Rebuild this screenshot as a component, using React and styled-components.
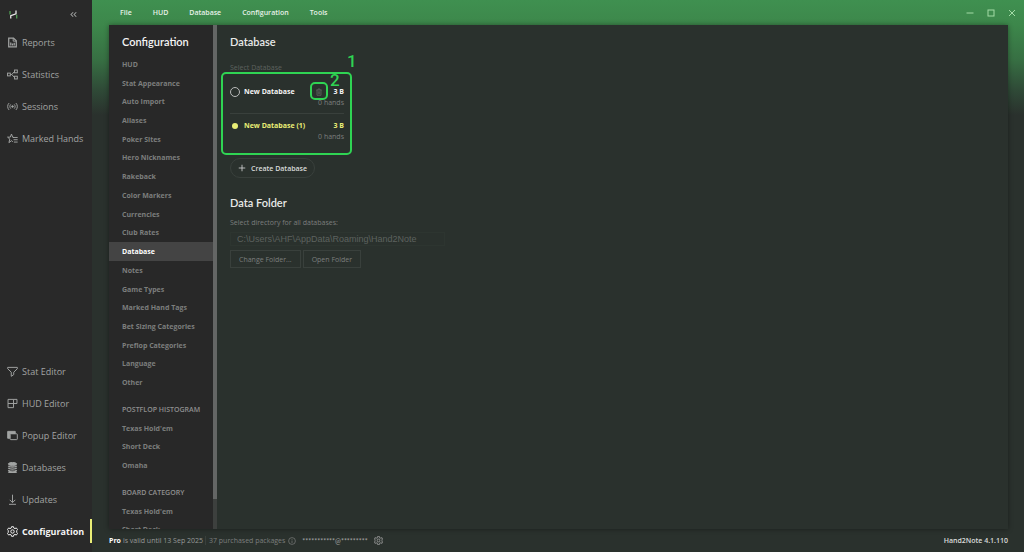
import React, { useState } from 'react';
import styled, { createGlobalStyle, ThemeProvider } from 'styled-components';

const theme = {
  colors: {
    sidebar: '#292929',
    surface: '#2a312d',
    nav: '#282828',
    navActive: '#444444',
    white: '#f4f4f4',
    text: '#a2a4a3',
    muted: '#7c7e7d',
    dim: '#5d625f',
    line: '#39403c',
    yellow: '#e9ee76',
    mark: '#2fd453',
  },
  fonts: {
    display: "Lato, 'Open Sans', sans-serif",
    mono: "'Liberation Sans', Arial, sans-serif",
  },
  fontSize: {
    xs: '7px',
    sm: '9px',
    lg: '11px',
  },
};

const GlobalStyle = createGlobalStyle`
  * {
    box-sizing: border-box;
  }

  body {
    margin: 0;
    background: #2a312d;
    font-family: 'Open Sans', 'Noto Sans', sans-serif;
    font-size: 7px;
  }

  button,
  input {
    font-family: inherit;
    margin: 0;
  }

  ul {
    list-style: none;
    margin: 0;
    padding: 0;
  }
`;

const Window = styled.div`
  display: flex;
  height: 100vh;
  overflow: hidden;
`;

const Sidebar = styled.nav`
  display: flex;
  flex-direction: column;
  width: 92px;
  flex-shrink: 0;
  padding-bottom: 5px;
  background: ${props => props.theme.colors.sidebar};
`;

const SidebarHeader = styled.div`
  display: flex;
  align-items: center;
  justify-content: space-between;
  height: 26px;
  padding: 2px 14px 0 8px;
`;

const IconButton = styled.button`
  display: flex;
  align-items: center;
  justify-content: center;
  padding: 0;
  border: none;
  background: none;
  color: ${props => props.theme.colors.text};
  cursor: pointer;
`;

const SidebarLink = styled.a`
  position: relative;
  display: flex;
  align-items: center;
  gap: 4px;
  height: 32px;
  padding-left: 7px;
  color: ${props => (props.$active ? props.theme.colors.white : props.theme.colors.text)};
  font-size: ${props => props.theme.fontSize.sm};
  font-weight: ${props => (props.$active ? 700 : 400)};
  text-decoration: none;
  white-space: nowrap;

  &::after {
    content: '';
    display: ${props => (props.$active ? 'block' : 'none')};
    position: absolute;
    right: 0;
    top: 4px;
    bottom: 4px;
    width: 2px;
    background: ${props => props.theme.colors.yellow};
  }
`;

const Spacer = styled.div`
  flex: 1;
`;

const Main = styled.div`
  display: flex;
  flex-direction: column;
  flex: 1;
  min-width: 0;
  background: linear-gradient(
    180deg,
    #3f9050 0,
    #3d874b 25px,
    #376f43 60px,
    #2f4a37 90px,
    ${props => props.theme.colors.surface} 115px
  );
`;

const TitleBar = styled.header`
  display: flex;
  align-items: center;
  justify-content: space-between;
  height: 25px;
  padding: 0 8px 0 28px;
`;

const Menu = styled.div`
  display: flex;
  gap: 21px;
`;

const MenuButton = styled.button`
  padding: 0;
  border: none;
  background: none;
  color: #e6f1e8;
  font-size: ${props => props.theme.fontSize.xs};
  font-weight: 600;
  cursor: pointer;
`;

const WindowControls = styled.div`
  display: flex;
  gap: 13px;

  button {
    width: 8px;
    color: #a3dba6;
  }
`;

const Panel = styled.div`
  display: flex;
  flex: 1;
  min-height: 0;
  margin: 0 16px 0 17px;
  background: ${props => props.theme.colors.surface};
  box-shadow: 0 0 5px rgba(0, 0, 0, 0.4);
`;

const ConfigNav = styled.nav`
  flex: 0 0 104px;
  overflow: hidden;
  background: ${props => props.theme.colors.nav};
`;

const NavTitle = styled.h2`
  margin: 0;
  padding: 9px 13px 0;
  height: 30px;
  color: ${props => props.theme.colors.white};
  font-family: ${props => props.theme.fonts.display};
  font-size: ${props => props.theme.fontSize.lg};
  font-weight: 600;
  line-height: 16px;
`;

// rows share the height of their group evenly
const NavList = styled.ul`
  display: grid;
  grid-auto-rows: 1fr;
  height: ${props => props.$height}px;
  margin-bottom: 9px;
`;

const NavLink = styled.a`
  display: flex;
  align-items: center;
  height: 100%;
  padding-left: 13px;
  background: ${props => (props.$active ? props.theme.colors.navActive : 'none')};
  color: ${props => (props.$active ? '#ffffff' : props.theme.colors.muted)};
  font-size: ${props => props.theme.fontSize.xs};
  font-weight: 700;
  text-decoration: none;
  white-space: nowrap;
`;

const NavHeading = styled.h3`
  margin: 0;
  padding-left: 13px;
  color: #8f8f8f;
  font-size: ${props => props.theme.fontSize.xs};
  font-weight: 600;
  line-height: 18px;
  white-space: nowrap;
`;

const ScrollTrack = styled.div`
  flex: 0 0 4px;
  background: #3d403e;
`;

const ScrollThumb = styled.div`
  height: 94%;
  background: #646665;
`;

const Content = styled.main`
  flex: 1;
  min-width: 0;
  padding: 9px 13px;
`;

const Title = styled.h1`
  margin: 0 0 12px;
  color: #e8e9e8;
  font-family: ${props => props.theme.fonts.display};
  font-size: ${props => props.theme.fontSize.lg};
  font-weight: 600;
  line-height: 16px;
`;

const FolderTitle = styled(Title)`
  margin: 17px 0 6px;
`;

const Caption = styled.div`
  display: block;
  color: ${props => props.theme.colors[props.$tone]};
  font-size: ${props => props.theme.fontSize.xs};
  line-height: 12px;
`;

const DatabaseArea = styled.div`
  position: relative;
  width: 114px;
  height: 84px;
  padding-top: 6px;
`;

const DatabaseRow = styled.div`
  display: grid;
  grid-template-columns: 10px 1fr auto auto;
  grid-auto-rows: 11px;
  align-items: center;
  column-gap: 4px;
  height: 34px;
  padding: 6px 0 5px;
  border-bottom: ${props => (props.$last ? 'none' : `1px solid ${props.theme.colors.line}`)};
  color: ${props => (props.$selected ? props.theme.colors.yellow : props.theme.colors.white)};
  font-size: ${props => props.theme.fontSize.xs};
  font-weight: 700;
  line-height: 11px;
  white-space: nowrap;
`;

const Radio = styled.input`
  appearance: none;
  width: 10px;
  height: 10px;
  border: 1px solid #b9bbba;
  border-radius: 50%;

  &:checked {
    border: 2px solid transparent;
    background: ${props => props.theme.colors.yellow} padding-box;
  }
`;

const DeleteButton = styled(IconButton)`
  margin-right: 6px;
  color: #59605b;
`;

const Hands = styled.span`
  grid-column: 1 / -1;
  justify-self: end;
  color: ${props => props.theme.colors.muted};
  font-weight: 400;
`;

const Callout = styled.div`
  position: absolute;
  left: ${props => props.$x}px;
  top: ${props => props.$y}px;
  width: ${props => props.$w}px;
  height: ${props => props.$h}px;
  border: ${props => props.$stroke}px solid ${props => props.theme.colors.mark};
  border-radius: 5px;
  pointer-events: none;
`;

const CalloutNumber = styled.span`
  position: absolute;
  left: ${props => props.$x}px;
  top: ${props => props.$y}px;
  color: ${props => props.theme.colors.mark};
  font-family: Roboto, 'Liberation Sans', sans-serif;
  font-size: 17px;
  font-weight: 500;
  line-height: 12px;
`;

const CreateButton = styled.button`
  display: flex;
  align-items: center;
  gap: 5px;
  height: 20px;
  padding: 0 7px;
  border: 1px solid ${props => props.theme.colors.line};
  border-radius: 10px;
  background: none;
  color: #d9dbda;
  font-size: ${props => props.theme.fontSize.xs};
  font-weight: 600;
  cursor: pointer;
`;

const PathInput = styled.input`
  display: block;
  width: 215px;
  height: 14px;
  margin: 3px 0 4px;
  padding: 0 6px;
  border: 1px solid #2d3530;
  background: none;
  color: ${props => props.theme.colors.dim};
  font-family: ${props => props.theme.fonts.mono};
  font-size: ${props => props.theme.fontSize.sm};
`;

const ButtonRow = styled.div`
  display: flex;
  gap: 2px;
`;

const FolderButton = styled.button`
  height: 18px;
  padding: 0 8px;
  border: 1px solid ${props => props.theme.colors.line};
  background: none;
  color: ${props => props.theme.colors.muted};
  font-size: ${props => props.theme.fontSize.xs};
  cursor: pointer;
`;

const StatusBar = styled.footer`
  display: flex;
  align-items: center;
  gap: 3px;
  height: 23px;
  padding: 0 16px 0 17px;
  color: ${props => props.theme.colors.muted};
  font-size: ${props => props.theme.fontSize.xs};
  white-space: nowrap;
`;

const License = styled.span`
  padding-right: 2px;
  border-right: 1px solid ${props => props.theme.colors.line};
  color: #979998;

  b {
    margin-right: 2px;
    color: #ffffff;
  }
`;

const Account = styled.span`
  margin: 0 3px;
  color: ${props => props.theme.colors.text};
  font-family: ${props => props.theme.fonts.display};
`;

const Version = styled.span`
  margin-left: auto;
  color: #dadcdb;
  font-weight: 600;
`;

const iconPaths = {
  reports: (
    <>
      <path d="M2.500 1.500h7L13.500 5.500v9h-11z" strokeWidth="1.800" />
      <path d="M9 1.500V6h4.500" />
      <path d="M5.500 12.500V8M8 12.500v-3M10.500 12.500v-4" strokeWidth="1.800" />
    </>
  ),
  statistics: (
    <>
      <rect x="0.800" y="6" width="4" height="4" />
      <rect x="11" y="1.500" width="4" height="4" />
      <rect x="11" y="10.500" width="4" height="4" />
      <path d="M5 8h2l4-4.500M7 8l4 4.500" />
    </>
  ),
  sessions: (
    <>
      <path d="M3 3C.3 5.800.3 10.200 3 13M13 3c2.700 2.800 2.700 7.200 0 10M5.400 5c-1.600 1.800-1.600 4.200 0 6M10.600 5c1.600 1.800 1.600 4.200 0 6" />
      <circle cx="8" cy="8" r="1.200" fill="currentColor" />
    </>
  ),
  marked: (
    <>
      <path d="M10 6.500 8.200 6 6.500 1.500 4.800 6H.8l3.300 2.800L2.800 14l3.700-2.800 2 1.500" />
      <path d="M8.500 6.500h7M9.500 9.800h6M10 13.200h5.500" />
    </>
  ),
  funnel: <path d="M1 2h14v2L9.800 9v3.500L6.200 15V9L1 4z" />,
  hud: <path d="M1.500 2h8v12h-8zM1.500 8h13V2h-5" />,
  popup: (
    <>
      <path d="M1 2h11v3H4v7H1z" fill="currentColor" />
      <rect x="4.500" y="5.500" width="10.500" height="8.500" rx="1" />
    </>
  ),
  databases: (
    <>
      <ellipse cx="8" cy="2.800" rx="6" ry="2.200" fill="currentColor" />
      <path d="M2 5.500c1 2.400 11 2.400 12 0M2 8.500c1 2.400 11 2.400 12 0M2 11.500c1 2.400 11 2.400 12 0M2 14c1 2 11 2 12 0" strokeWidth="1.900" />
    </>
  ),
  updates: <path d="M8 1v11M4 8.500l4 4 4-4M3 15h10" />,
  gear: (
    <>
      <path d="M6.600 1h2.800l.5 2 1.700.8 1.900-1 1.800 2.300-1.200 1.700v2.400l1.200 1.700-1.800 2.300-1.900-1-1.700.8-.5 2H6.600l-.5-2-1.700-.8-1.900 1L.7 10.900l1.200-1.700V6.800L.7 5.100l1.800-2.300 1.900 1L6.100 3z" />
      <circle cx="8" cy="8" r="2.500" />
    </>
  ),
  collapse: <path d="M7.500 4 3.500 8l4 4M13 4 9 8l4 4" />,
  trash: <path d="M2.500 4h11M6 4V2h4v2M4 4v10.500h8V4M6.500 6.500v6M9.500 6.500v6" strokeWidth="1.800" />,
  plus: <path d="M8 1.500v13M1.500 8h13" />,
  info: (
    <>
      <circle cx="8" cy="8" r="6.800" />
      <path d="M8 7v5M8 4v1.500" />
    </>
  ),
  minimize: <path d="M1 8h14" />,
  maximize: <rect x="2" y="2" width="12" height="12" />,
  close: <path d="m2 2 12 12M14 2 2 14" />,
};

const Icon = ({ name, size = 11, weight = 1.4 }) => (
  <svg
    width={size}
    height={size}
    viewBox="0 0 16 16"
    fill="none"
    stroke="currentColor"
    strokeWidth={weight}
    aria-hidden="true"
  >
    {iconPaths[name]}
  </svg>
);

const Logo = () => (
  <svg width="10" height="10" viewBox="0 0 20 20" fill="none" strokeWidth="2.200" aria-hidden="true">
    <path d="M4 4v7M17.500 11.500V19" stroke="#58b45b" />
    <path d="M5.500 19v-5.500L16 9.500V3" stroke="#e8e8e8" strokeWidth="2.600" />
  </svg>
);

const topLinks = [
  { icon: 'reports', label: 'Reports' },
  { icon: 'statistics', label: 'Statistics' },
  { icon: 'sessions', label: 'Sessions' },
  { icon: 'marked', label: 'Marked Hands' },
];

const bottomLinks = [
  { icon: 'funnel', label: 'Stat Editor' },
  { icon: 'hud', label: 'HUD Editor' },
  { icon: 'popup', label: 'Popup Editor' },
  { icon: 'databases', label: 'Databases' },
  { icon: 'updates', label: 'Updates' },
  { icon: 'gear', label: 'Configuration', active: true },
];

const menuItems = ['File', 'HUD', 'Database', 'Configuration', 'Tools'];

const configItems = [
  'HUD',
  'Stat Appearance',
  'Auto Import',
  'Aliases',
  'Poker Sites',
  'Hero Nicknames',
  'Rakeback',
  'Color Markers',
  'Currencies',
  'Club Rates',
  'Database',
  'Notes',
  'Game Types',
  'Marked Hand Tags',
  'Bet Sizing Categories',
  'Preflop Categories',
  'Language',
  'Other',
];

const histogramItems = ['Texas Hold\'em', 'Short Deck', 'Omaha'];
const boardItems = ['Texas Hold\'em', 'Short Deck'];

const databases = [
  { id: 'db-0', name: 'New Database', size: '3 B', hands: 0 },
  { id: 'db-1', name: 'New Database (1)', size: '3 B', hands: 0 },
];

const SidebarItems = ({ items }) =>
  items.map((item) => (
    <SidebarLink key={item.label} href="#" $active={item.active}>
      <Icon name={item.icon} />
      {item.label}
    </SidebarLink>
  ));

const NavGroup = ({ items, height, active }) => (
  <NavList $height={height}>
    {items.map((item) => (
      <li key={item}>
        <NavLink href="#" $active={item === active}>{item}</NavLink>
      </li>
    ))}
  </NavList>
);

const App = () => {
  const [selected, setSelected] = useState('db-1');

  return (
    <ThemeProvider theme={theme}>
      <GlobalStyle />
      <Window>
        <Sidebar>
          <SidebarHeader>
            <Logo />
            <IconButton aria-label="Collapse sidebar">
              <Icon name="collapse" size={9} weight={1.8} />
            </IconButton>
          </SidebarHeader>
          <SidebarItems items={topLinks} />
          <Spacer />
          <SidebarItems items={bottomLinks} />
        </Sidebar>

        <Main>
          <TitleBar>
            <Menu>
              {menuItems.map((item) => (
                <MenuButton key={item}>{item}</MenuButton>
              ))}
            </Menu>
            <WindowControls>
              <IconButton aria-label="Minimize"><Icon name="minimize" size={8} weight={2} /></IconButton>
              <IconButton aria-label="Maximize"><Icon name="maximize" size={8} weight={2} /></IconButton>
              <IconButton aria-label="Close"><Icon name="close" size={8} weight={2} /></IconButton>
            </WindowControls>
          </TitleBar>

          <Panel>
            <ConfigNav>
              <NavTitle>Configuration</NavTitle>
              <NavGroup items={configItems} height={337} active="Database" />
              <NavHeading>POSTFLOP HISTOGRAM</NavHeading>
              <NavGroup items={histogramItems} height={56} />
              <NavHeading>BOARD CATEGORY</NavHeading>
              <NavGroup items={boardItems} height={37} />
            </ConfigNav>
            <ScrollTrack>
              <ScrollThumb />
            </ScrollTrack>

            <Content>
              <Title>Database</Title>
              <Caption $tone="dim">Select Database</Caption>
              <DatabaseArea>
                {databases.map((db, index) => (
                  <DatabaseRow
                    key={db.id}
                    $selected={db.id === selected}
                    $last={index === databases.length - 1}
                  >
                    <Radio
                      type="radio"
                      name="database"
                      id={db.id}
                      checked={db.id === selected}
                      onChange={() => setSelected(db.id)}
                    />
                    <label htmlFor={db.id}>{db.name}</label>
                    {db.id !== selected ? (
                      <DeleteButton aria-label={`Delete ${db.name}`}>
                        <Icon name="trash" size={8} />
                      </DeleteButton>
                    ) : <span />}
                    <span>{db.size}</span>
                    <Hands>{db.hands} hands</Hands>
                  </DatabaseRow>
                ))}
                <Callout $x={-9} $y={-2} $w={131} $h={83} $stroke={2} />
                <CalloutNumber $x={117} $y={-19}>1</CalloutNumber>
                <Callout $x={80} $y={8} $w={18} $h={18} $stroke={2} />
                <CalloutNumber $x={100} $y={0}>2</CalloutNumber>
              </DatabaseArea>
              <CreateButton>
                <Icon name="plus" size={8} weight={1.6} />
                Create Database
              </CreateButton>

              <FolderTitle as="h2">Data Folder</FolderTitle>
              <Caption as="label" htmlFor="folder" $tone="muted">
                Select directory for all databases:
              </Caption>
              <PathInput
                id="folder"
                type="text"
                readOnly
                value="C:\Users\AHF\AppData\Roaming\Hand2Note"
              />
              <ButtonRow>
                <FolderButton>Change Folder...</FolderButton>
                <FolderButton>Open Folder</FolderButton>
              </ButtonRow>
            </Content>
          </Panel>

          <StatusBar>
            <License><b>Pro</b>is valid until 13 Sep 2025</License>
            <span>37 purchased packages</span>
            <Icon name="info" size={8} />
            <Account>***********@*********</Account>
            <Icon name="gear" size={9} weight={1.8} />
            <Version>Hand2Note 4.1.110</Version>
          </StatusBar>
        </Main>
      </Window>
    </ThemeProvider>
  );
};

export default App;
